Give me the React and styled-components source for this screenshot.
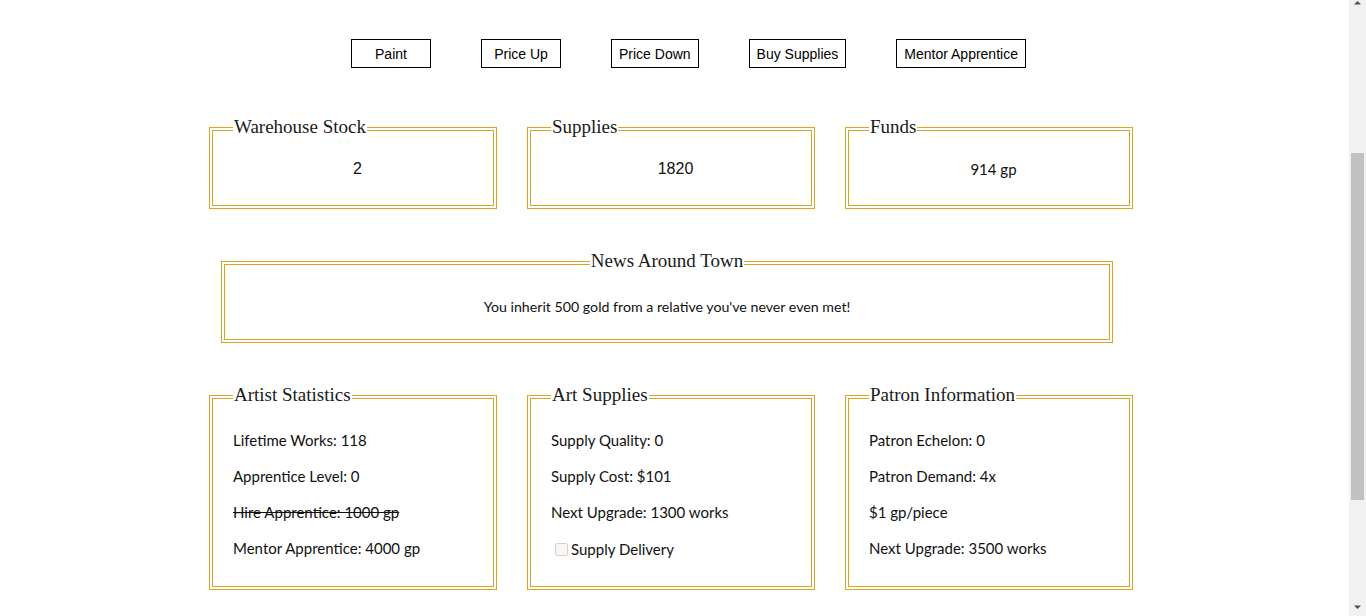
import React from "react";
import styled, { createGlobalStyle } from "styled-components";

const GlobalStyle = createGlobalStyle`
  html, body { margin: 0; padding: 0; background: #fff; }
  body { font-family: "Lato", "Open Sans", sans-serif; color: #111; }
`;

const Page = styled.div`
  padding: 39px 0 20px;
  box-sizing: border-box;
`;

const Main = styled.div`
  width: 924px;
  margin-left: 209px;
  display: flex;
  flex-direction: column;
`;

const Toolbar = styled.div`
  display: flex;
  gap: 50px;
  margin-left: 142px;
  margin-bottom: 50px;
`;

const Button = styled.button`
  min-width: 80px;
  height: 29px;
  padding: 0 7px;
  border: 1px solid #000;
  background: #fff;
  color: #000;
  font-family: "Liberation Sans", Arial, sans-serif;
  font-size: 14px;
  box-sizing: border-box;
  cursor: pointer;
`;

const Row = styled.div`
  display: grid;
  grid-template-columns: repeat(3, 288px);
  gap: 30px;
`;

const Panel = styled.fieldset`
  margin: 0;
  min-width: 0;
  padding: 0 20px;
  border: 4px double #daa520;
  box-sizing: border-box;
`;

const Legend = styled.legend`
  font-family: "Liberation Serif", "Times New Roman", serif;
  font-size: 19px;
  line-height: 18px;
  padding: 0 1px 4px;
  color: #1a1a1a;
  margin-left: ${(p) => (p.$center ? "auto" : "0")};
  margin-right: ${(p) => (p.$center ? "auto" : "0")};
`;

const Value = styled.div`
  height: 58px;
  padding: 0 0 7px 9px;
  display: flex;
  align-items: center;
  justify-content: center;
  font-family: ${(p) => (p.$arial ? '"Liberation Sans", Arial, sans-serif' : '"Lato", sans-serif')};
  font-size: ${(p) => (p.$arial ? "16px" : "15px")};
`;

const News = styled(Panel)`
  width: 892px;
  margin: 43px 0 43px 12px;
`;

const NewsText = styled.div`
  height: 65px;
  display: flex;
  align-items: center;
  justify-content: center;
  font-size: 14.2px;
`;

const Lines = styled.div`
  display: flex;
  flex-direction: column;
  gap: 16px;
  padding: 22px 0 28px;
`;

const Line = styled.div`
  font-size: 15px;
  line-height: 20px;
  text-decoration: ${(p) => (p.$struck ? "line-through" : "none")};
`;

const CheckLabel = styled.label`
  font-size: 15px;
  line-height: 20px;
  display: flex;
  align-items: center;
  margin-top: 1px;
  margin-bottom: -1px;
  input { margin: 3px 3px 3px 4px; width: 13px; height: 13px; }
`;

const ScrollbarArt = styled.svg`
  position: fixed;
  top: 0;
  right: 0;
  display: block;
`;

function Scrollbar() {
  return (
    <ScrollbarArt width="17" height="616" viewBox="0 0 17 616" aria-hidden="true">
      <rect x="0" y="0" width="17" height="616" fill="#f1f1f1" />
      <rect x="2" y="153" width="13" height="347" fill="#c1c1c1" />
      <polygon points="5,4.5 12,4.5 8.5,1" fill="#505050" />
      <polygon points="5,605.5 12,605.5 8.5,609" fill="#505050" />
    </ScrollbarArt>
  );
}

export default function App() {
  return (
    <Page>
      <GlobalStyle />
      <Main>
        <Toolbar>
          <Button>Paint</Button>
          <Button>Price Up</Button>
          <Button>Price Down</Button>
          <Button>Buy Supplies</Button>
          <Button>Mentor Apprentice</Button>
        </Toolbar>
        <Row>
          <Panel>
            <Legend>Warehouse Stock</Legend>
            <Value $arial>2</Value>
          </Panel>
          <Panel>
            <Legend>Supplies</Legend>
            <Value $arial>1820</Value>
          </Panel>
          <Panel>
            <Legend>Funds</Legend>
            <Value>914 gp</Value>
          </Panel>
        </Row>
        <News>
          <Legend $center>News Around Town</Legend>
          <NewsText>You inherit 500 gold from a relative you've never even met!</NewsText>
        </News>
        <Row>
          <Panel>
            <Legend>Artist Statistics</Legend>
            <Lines>
              <Line>Lifetime Works: 118</Line>
              <Line>Apprentice Level: 0</Line>
              <Line $struck>Hire Apprentice: 1000 gp</Line>
              <Line>Mentor Apprentice: 4000 gp</Line>
            </Lines>
          </Panel>
          <Panel>
            <Legend>Art Supplies</Legend>
            <Lines>
              <Line>Supply Quality: 0</Line>
              <Line>Supply Cost: $101</Line>
              <Line>Next Upgrade: 1300 works</Line>
              <CheckLabel>
                <input type="checkbox" disabled />
                Supply Delivery
              </CheckLabel>
            </Lines>
          </Panel>
          <Panel>
            <Legend>Patron Information</Legend>
            <Lines>
              <Line>Patron Echelon: 0</Line>
              <Line>Patron Demand: 4x</Line>
              <Line>$1 gp/piece</Line>
              <Line>Next Upgrade: 3500 works</Line>
            </Lines>
          </Panel>
        </Row>
      </Main>
      <Scrollbar />
    </Page>
  );
}
